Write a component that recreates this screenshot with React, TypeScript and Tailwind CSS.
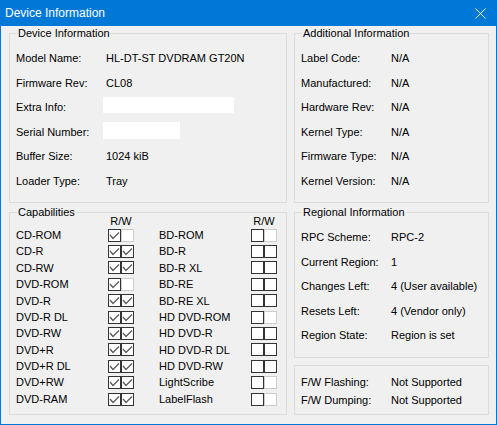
import type { ReactNode } from "react";

// Win10-style "Device Information" dialog — static mock, all values hard-coded.

type Box = "on" | "off" | "dis";

const left: [string, Box, Box][] = [
  ["CD-ROM", "on", "dis"],
  ["CD-R", "on", "on"],
  ["CD-RW", "on", "on"],
  ["DVD-ROM", "on", "dis"],
  ["DVD-R", "on", "on"],
  ["DVD-R DL", "on", "on"],
  ["DVD-RW", "on", "on"],
  ["DVD+R", "on", "on"],
  ["DVD+R DL", "on", "on"],
  ["DVD+RW", "on", "on"],
  ["DVD-RAM", "on", "on"],
];

const right: [string, Box, Box][] = [
  ["BD-ROM", "off", "dis"],
  ["BD-R", "off", "off"],
  ["BD-R XL", "off", "off"],
  ["BD-RE", "off", "off"],
  ["BD-RE XL", "off", "off"],
  ["HD DVD-ROM", "off", "dis"],
  ["HD DVD-R", "off", "off"],
  ["HD DVD-R DL", "off", "off"],
  ["HD DVD-RW", "off", "off"],
  ["LightScribe", "off", "dis"],
  ["LabelFlash", "off", "dis"],
];

function Group({ title, className, children }: { title?: string; className: string; children: ReactNode }) {
  return (
    <div className={`relative border border-[#dcdcdc] ${className}`}>
      {title && (
        <span className="absolute left-[7px] top-[-7px] bg-[#f0f0f0] px-[1px] leading-[13px]">{title}</span>
      )}
      {children}
    </div>
  );
}

function Row({ label, children }: { label: string; children: ReactNode }) {
  return (
    <div className="flex h-[24.5px] items-center">
      <span className="w-[90px] shrink-0">{label}</span>
      {children}
    </div>
  );
}

function Check({ state }: { state: Box }) {
  return (
    <div
      className={`flex h-[13px] w-[13px] items-center justify-center border bg-white ${
        state === "dis" ? "border-[#cccccc]" : "border-[#333333]"
      }`}
    >
      {state === "on" && (
        <svg width="11" height="11" viewBox="0 0 11 11">
          <polyline points="1,5 4,8.5 10,2.5" fill="none" stroke="#5a5a5a" strokeWidth="1.3" />
        </svg>
      )}
    </div>
  );
}

function CapColumn({ rows }: { rows: [string, Box, Box][] }) {
  return (
    <div className="flex flex-col">
      <div className="flex h-[11px] items-center">
        <span className="w-[92px]" />
        <span className="w-[26px] text-center leading-[11px]">R/W</span>
      </div>
      {rows.map(([name, r, w]) => (
        <div key={name} className="flex h-[16.4px] items-center">
          <span className="w-[92px]">{name}</span>
          <Check state={r} />
          <Check state={w} />
        </div>
      ))}
    </div>
  );
}

export default function App() {
  return (
    <div className="flex h-[425px] w-[497px] flex-col bg-[#0078d7] px-[1px] pb-[1px] font-['Liberation_Sans',Arial,sans-serif] text-[11px] text-black">
      <div className="flex h-[26px] shrink-0 items-center justify-between pl-[4px] pr-[10px] text-[12px] text-white">
        <span>Device Information</span>
        <svg width="11" height="11" viewBox="0 0 11 11">
          <path d="M0.5 0.5L10.5 10.5M10.5 0.5L0.5 10.5" stroke="#fff" strokeWidth="1" />
        </svg>
      </div>

      <div className="grid flex-1 grid-cols-[278px_195px] grid-rows-[170px_203px] gap-x-[7px] gap-y-[9px] bg-[#f0f0f0] pl-[8px] pt-[7px]">
        <Group title="Device Information" className="pl-[6px] pt-[12px]">
          <Row label="Model Name:">HL-DT-ST DVDRAM GT20N</Row>
          <Row label="Firmware Rev:">CL08</Row>
          <Row label="Extra Info:">
            <div className="mb-[4px] ml-[-3px] h-[16px] w-[131px] bg-white" />
          </Row>
          <Row label="Serial Number:">
            <div className="mb-[3px] ml-[-3px] h-[17px] w-[77px] bg-white" />
          </Row>
          <Row label="Buffer Size:">1024 kiB</Row>
          <Row label="Loader Type:">Tray</Row>
        </Group>

        <Group title="Additional Information" className="pl-[6px] pt-[12px]">
          <Row label="Label Code:">N/A</Row>
          <Row label="Manufactured:">N/A</Row>
          <Row label="Hardware Rev:">N/A</Row>
          <Row label="Kernel Type:">N/A</Row>
          <Row label="Firmware Type:">N/A</Row>
          <Row label="Kernel Version:">N/A</Row>
        </Group>

        <Group title="Capabilities" className="flex gap-[25px] pl-[6px] pt-[3px]">
          <CapColumn rows={left} />
          <CapColumn rows={right} />
        </Group>

        <div className="flex flex-col gap-[7px]">
          <Group title="Regional Information" className="flex-1 pl-[6px] pt-[12px]">
            <Row label="RPC Scheme:">RPC-2</Row>
            <Row label="Current Region:">1</Row>
            <Row label="Changes Left:">4 (User available)</Row>
            <Row label="Resets Left:">4 (Vendor only)</Row>
            <Row label="Region State:">Region is set</Row>
          </Group>
          <Group className="h-[50px] shrink-0 pl-[6px] pt-[7px]">
            <div className="flex h-[18px] items-center">
              <span className="w-[90px]">F/W Flashing:</span>
              Not Supported
            </div>
            <div className="flex h-[18px] items-center">
              <span className="w-[90px]">F/W Dumping:</span>
              Not Supported
            </div>
          </Group>
        </div>
      </div>
    </div>
  );
}
